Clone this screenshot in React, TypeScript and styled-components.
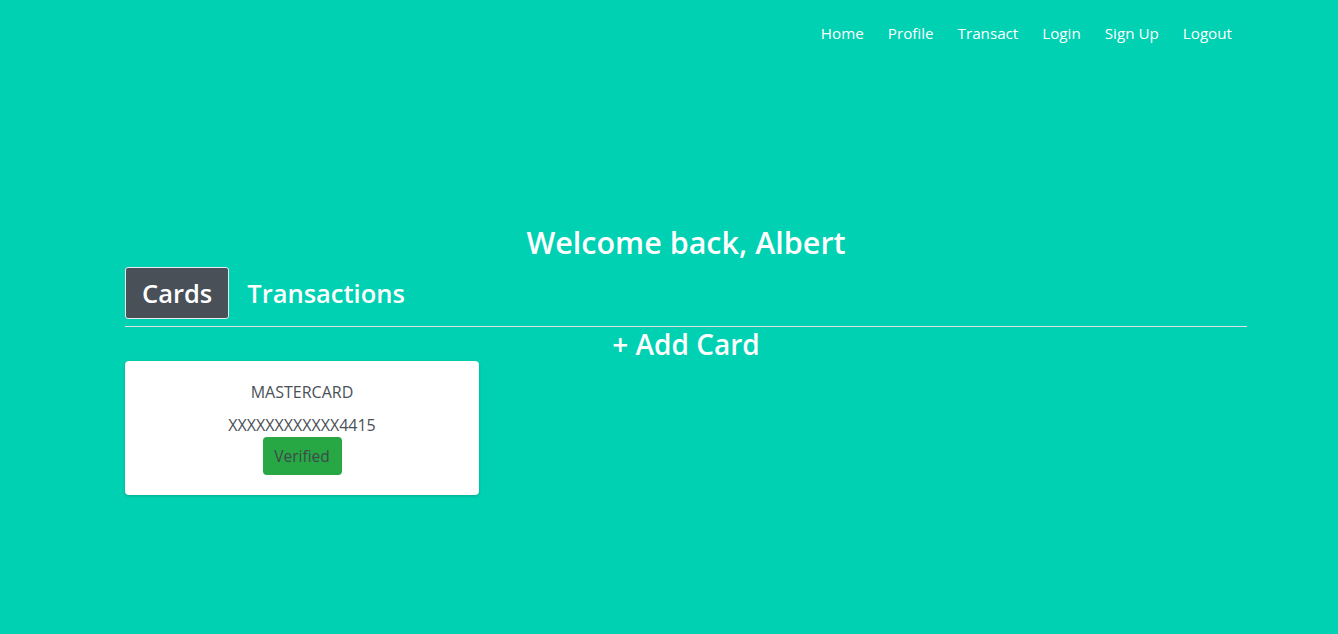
import React from "react";
import styled, { createGlobalStyle } from "styled-components";

const Global = createGlobalStyle`
  html, body { margin: 0; padding: 0; }
  body {
    background: #00d1b2;
    font-family: "Open Sans", "Liberation Sans", sans-serif;
    color: #fff;
    min-height: 634px;
  }
`;

const Nav = styled.nav`
  display: flex;
  justify-content: flex-end;
  padding: 21px 94px 0 0;
  height: 40px;
`;

const NavLink = styled.a`
  color: #fff;
  font-size: 15.2px;
  line-height: 24px;
  padding: 0 12px;
  text-decoration: none;
`;

const Main = styled.main`
  width: 1122px;
  margin: 162px 0 0 125px;
`;

const Title = styled.h2`
  margin: 0;
  text-align: center;
  font-size: 30.5px;
  font-weight: 600;
  line-height: 38px;
`;

const TabBar = styled.div`
  display: flex;
  gap: 1px;
  margin-top: 6px;
  border-bottom: 1px solid #dee2e6;
  padding-bottom: 7px;
`;

const Tab = styled.button<{ $active?: boolean }>`
  font-family: inherit;
  font-size: 25.5px;
  font-weight: 600;
  color: #fff;
  height: 52px;
  padding: 0 16px;
  border-radius: 3px;
  border: 1px solid ${(p) => (p.$active ? "#e9ecef" : "transparent")};
  background: ${(p) => (p.$active ? "#495057" : "transparent")};
  cursor: pointer;
`;

const AddCard = styled.h3`
  margin: 0;
  text-align: center;
  font-size: 28px;
  font-weight: 600;
  line-height: 34px;
`;

const Card = styled.div`
  width: 354px;
  height: 134px;
  box-sizing: border-box;
  background: #fff;
  border-radius: 4px;
  box-shadow: 0 1px 3px rgba(0, 0, 0, 0.2);
  display: flex;
  flex-direction: column;
  align-items: center;
  padding-top: 20px;
  color: #495057;
  font-size: 16px;
`;

const Line = styled.p<{ $mt?: number }>`
  margin: ${(p) => p.$mt ?? 0}px 0 0;
  line-height: 22px;
`;

const Badge = styled.button`
  margin-top: 1px;
  width: 79px;
  height: 38px;
  border: none;
  border-radius: 4px;
  background: #28a745;
  color: #3d4a4a;
  font-family: inherit;
  font-size: 15.5px;
`;

export default function App() {
  return (
    <>
      <Global />
      <Nav>
        {["Home", "Profile", "Transact", "Login", "Sign Up", "Logout"].map((l) => (
          <NavLink key={l} href="#">{l}</NavLink>
        ))}
      </Nav>
      <Main>
        <Title>Welcome back, Albert</Title>
        <TabBar>
          <Tab $active>Cards</Tab>
          <Tab>Transactions</Tab>
        </TabBar>
        <AddCard>+ Add Card</AddCard>
        <Card>
          <Line>MASTERCARD</Line>
          <Line $mt={11}>XXXXXXXXXXXX4415</Line>
          <Badge>Verified</Badge>
        </Card>
      </Main>
    </>
  );
}
